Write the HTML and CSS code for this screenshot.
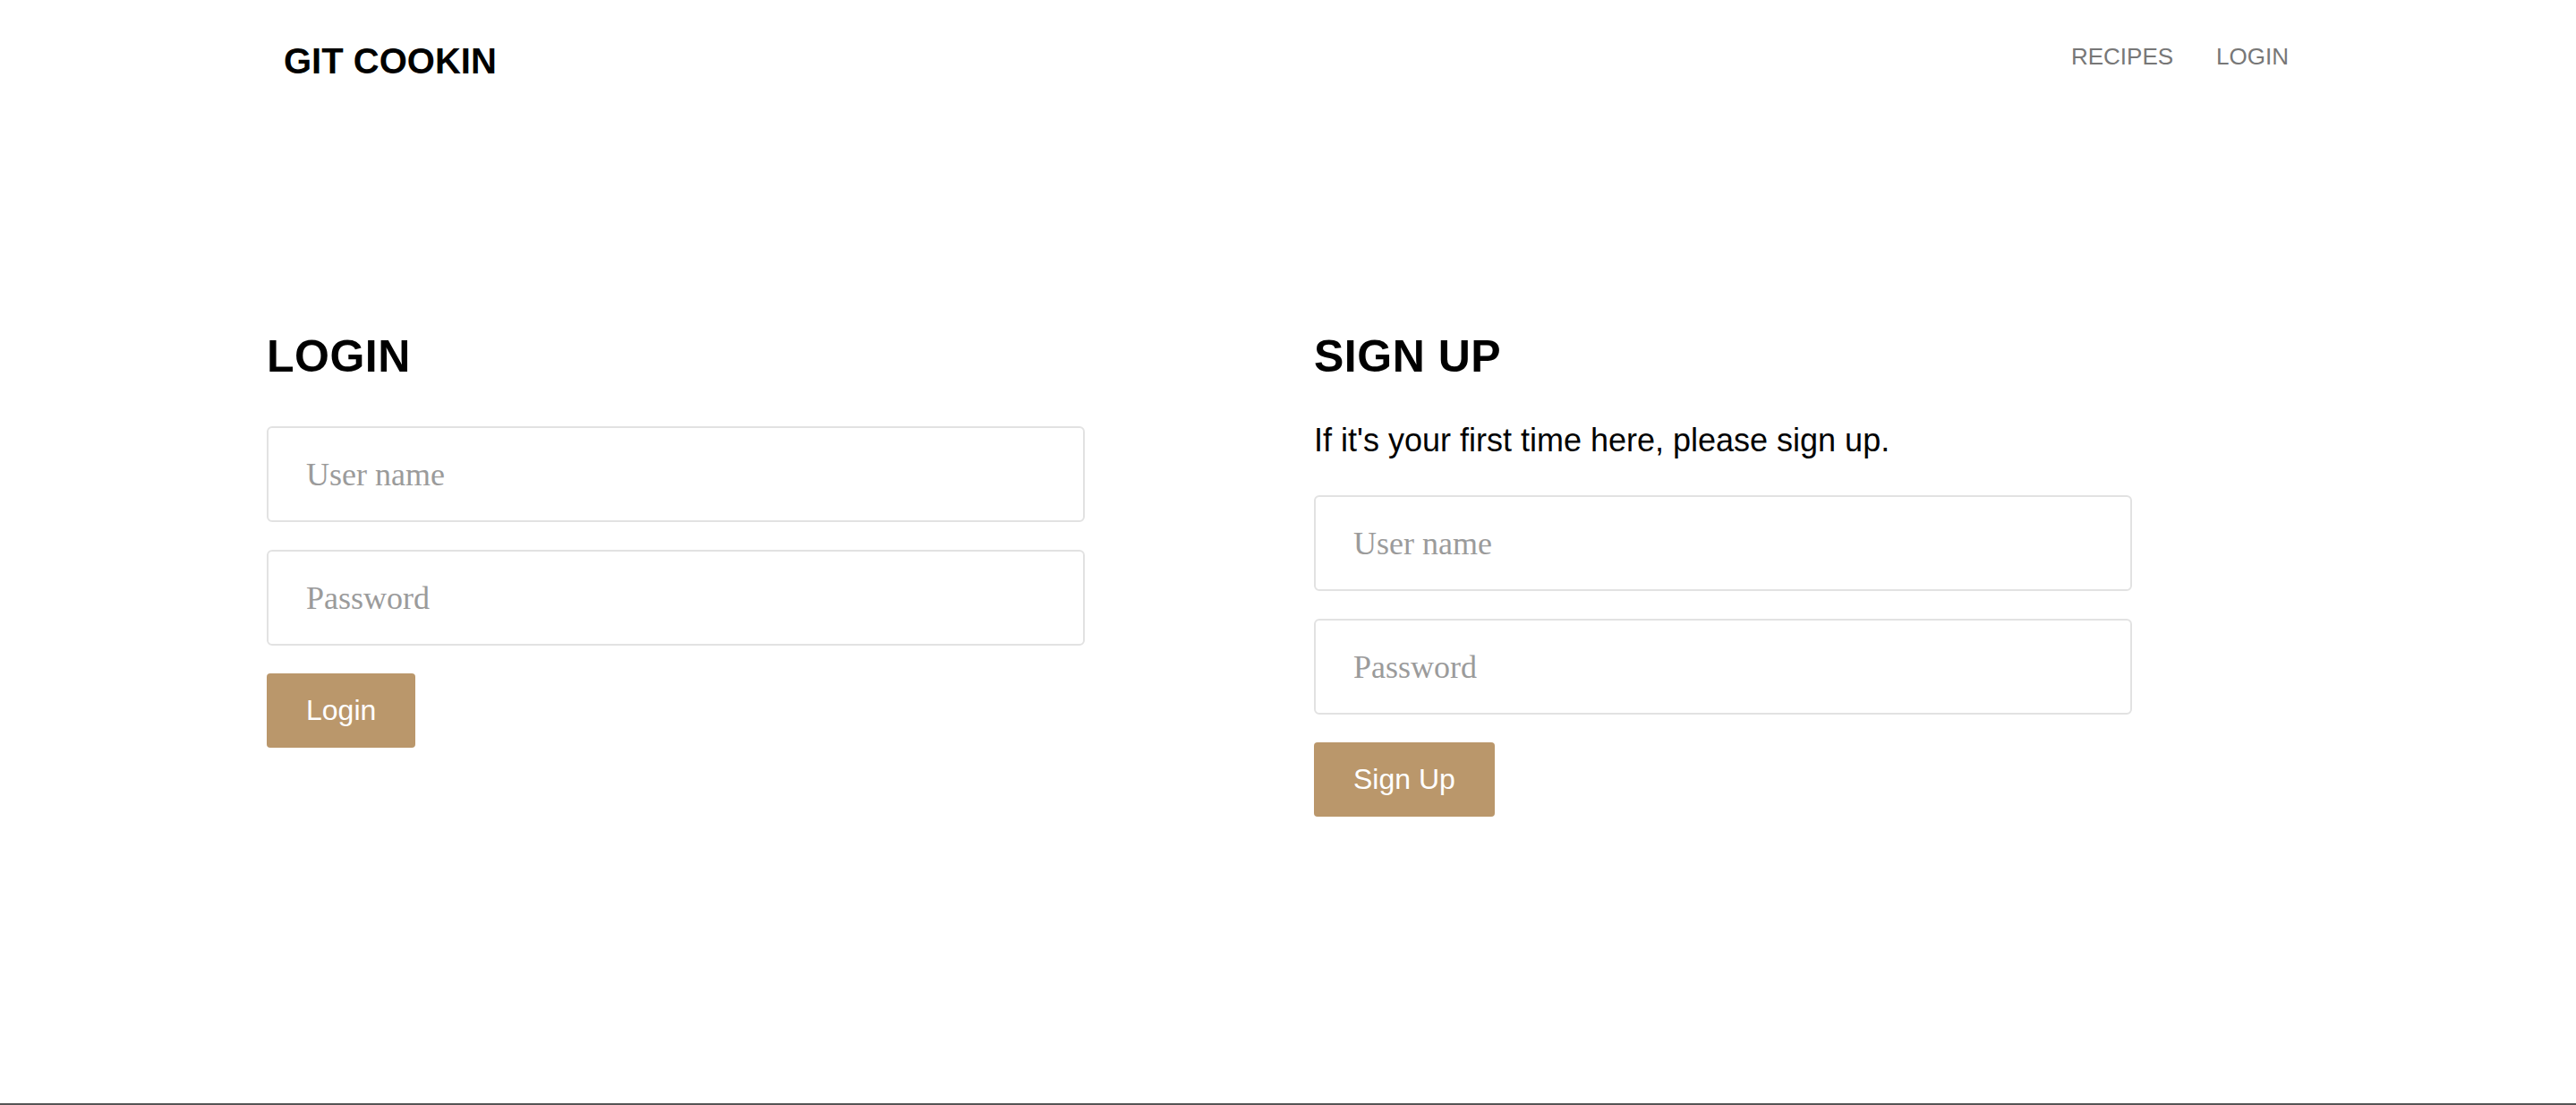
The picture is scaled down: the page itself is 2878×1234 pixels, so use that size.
FILE: index.html
```html
<!DOCTYPE html>
<html lang="en">
<head>
<meta charset="utf-8">
<title>Git Cookin</title>
<link rel="stylesheet" href="styles.css">
</head>
<body>
<div class="page">
  <header class="site-header">
    <a class="logo" href="#">GIT COOKIN</a>
    <nav class="nav">
      <a href="#">RECIPES</a>
      <a href="#">LOGIN</a>
    </nav>
  </header>
  <main class="forms">
    <section class="form-col">
      <h2 class="form-title">LOGIN</h2>
      <form class="form">
        <input class="field" type="text" placeholder="User name">
        <input class="field" type="password" placeholder="Password">
        <button class="btn" type="button">Login</button>
      </form>
    </section>
    <section class="form-col">
      <h2 class="form-title">SIGN UP</h2>
      <p class="intro">If it's your first time here, please sign up.</p>
      <form class="form">
        <input class="field" type="text" placeholder="User name">
        <input class="field" type="password" placeholder="Password">
        <button class="btn" type="button">Sign Up</button>
      </form>
    </section>
  </main>
</div>
<footer class="site-footer"></footer>
</body>
</html>
```
FILE: styles.css
```css
* { box-sizing: border-box; }
html, body { margin: 0; padding: 0; background: #fff; }
body { font-family: "Liberation Sans", Arial, sans-serif; color: #000; }

.page {
  width: 2282px;
  margin: 0 auto;
  min-height: 1232px;
}

.site-header {
  display: flex;
  justify-content: space-between;
  align-items: flex-start;
  padding: 48px 23px 0 19px;
}
.logo {
  font-size: 40px;
  line-height: 1;
  font-weight: 700;
  color: #000;
  text-decoration: none;
}
.nav {
  display: flex;
  gap: 48px;
  margin-top: 2px;
}
.nav a {
  font-size: 26px;
  line-height: 1;
  color: #777;
  text-decoration: none;
}

.forms {
  display: grid;
  grid-template-columns: 1170px 1fr;
  padding-top: 285px;
}
.form-title {
  margin: 0 0 53px;
  font-size: 50px;
  line-height: 1;
  font-weight: 700;
  letter-spacing: 0.5px;
}
.intro {
  margin: -2px 0 43px;
  font-size: 36px;
  line-height: 1;
}
.form { display: flex; flex-direction: column; align-items: flex-start; }
.field {
  display: block;
  width: 914px;
  height: 107px;
  margin: 0 0 31px;
  padding: 0 42px;
  border: 2px solid #e2e2e2;
  border-radius: 6px;
  font-family: "Liberation Serif", "Times New Roman", serif;
  font-size: 36px;
  color: #333;
  background: #fff;
  outline: none;
}
.field::placeholder { color: #9b9b9b; }
.btn {
  height: 83px;
  padding: 0 44px;
  border: 0;
  border-radius: 4px;
  background: #ba976b;
  color: #fff;
  font-family: "Liberation Sans", Arial, sans-serif;
  font-size: 32px;
  cursor: pointer;
}

.site-footer {
  height: 80px;
  background: #555;
}
```
